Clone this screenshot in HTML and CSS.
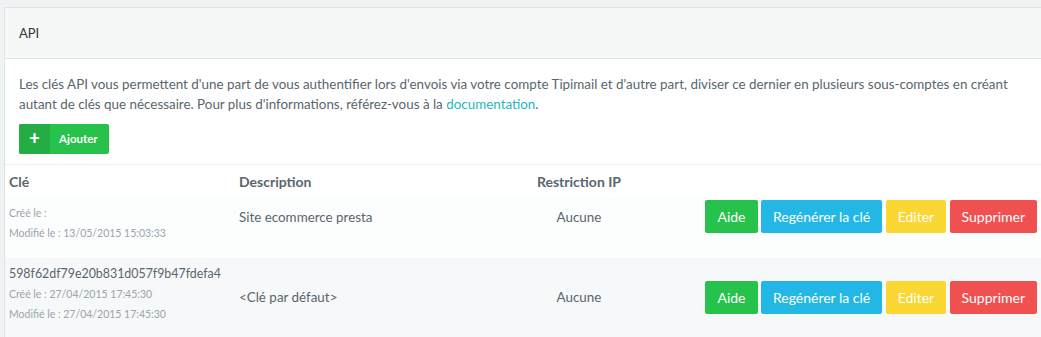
FILE: index.html
```html
<!DOCTYPE html>
<html lang="fr">
<head>
  <meta charset="UTF-8"/>
  <title>API</title>
  <link rel="stylesheet" href="styles.css">
</head>
<body>
  <div class="panel">
    <div class="panel-heading">API</div>

    <div class="panel-body">
      <p>Les clés API vous permettent d'une part de vous authentifier lors d'envois via votre compte Tipimail et d'autre part, diviser ce dernier en plusieurs sous-comptes en créant autant de clés que nécessaire. Pour plus d'informations, référez-vous à la <a href="#">documentation</a>.</p>
      <button class="btn-add"><span class="icon">+</span><span class="label">Ajouter</span></button>
    </div>

    <table>
      <thead>
        <tr>
          <th class="col-key">Clé</th>
          <th class="col-desc">Description</th>
          <th class="col-ip">Restriction IP</th>
          <th class="col-act"></th>
        </tr>
      </thead>
      <tbody>
        <tr class="no-key">
          <td class="key">
            <div class="meta">Créé le :</div>
            <div class="meta">Modifié le : 13/05/2015 15:03:33</div>
          </td>
          <td class="mid">Site ecommerce presta</td>
          <td class="mid center">Aucune</td>
          <td class="mid actions">
            <button class="btn green">Aide</button>
            <button class="btn blue">Regénérer la clé</button>
            <button class="btn yellow">Editer</button>
            <button class="btn red">Supprimer</button>
          </td>
        </tr>
        <tr class="striped">
          <td class="key">
            <div class="hash">598f62df79e20b831d057f9b47fdefa4</div>
            <div class="meta">Créé le : 27/04/2015 17:45:30</div>
            <div class="meta">Modifié le : 27/04/2015 17:45:30</div>
          </td>
          <td class="mid">&lt;Clé par défaut&gt;</td>
          <td class="mid center">Aucune</td>
          <td class="mid actions">
            <button class="btn green">Aide</button>
            <button class="btn blue">Regénérer la clé</button>
            <button class="btn yellow">Editer</button>
            <button class="btn red">Supprimer</button>
          </td>
        </tr>
      </tbody>
    </table>
  </div>
</body>
</html>
```

FILE: styles.css
```css
body { margin:0; padding:7px 0 0 4px; background:#f0f3f4; font-family:'Lato',sans-serif; font-size:13.4px; color:#58666e; overflow:hidden; }
.panel { width:1038px; background:#fff; border:1px solid #dee5e7; border-bottom:none; }
.panel-heading { padding:15px 14px; line-height:20px; background:#f6f8f8; border-bottom:1px solid #dee5e7; color:#333; font-size:13px; }
.panel-body { padding:15px 15px 10px 14px; }
.panel-body p { margin:0 0 10px; line-height:20px; }
.panel-body a { color:#1fb5c0; text-decoration:none; }

.btn-add { display:flex; height:30px; padding:0; border:none; border-radius:2px; background:#27c24c; color:#fff; font-family:inherit; cursor:pointer; overflow:hidden; }
.btn-add .icon { width:31px; height:30px; line-height:28px; background:#23ad44; font-size:18px; font-weight:900; }
.btn-add .label { padding:0 11px 0 9px; line-height:30px; font-size:11.5px; font-weight:bold; }

table { width:100%; border-collapse:collapse; border-top:1px solid #eaeff0; }
th { height:32px; padding:0 4px; text-align:left; font-size:14px; font-weight:bold; }
th.col-key { width:222px; }
th.col-desc { width:227px; }
th.col-ip { width:210px; text-align:center; }
td { padding:6px 4px 15px; vertical-align:middle; }
td.mid { padding-bottom:9px; }
tr.no-key { background:#fcfdfd; }
tr.no-key td.mid { padding-top:3px; padding-bottom:25px; }
tr.striped { background:#f6f8f9; }
.center { text-align:center; }
.hash { line-height:20px; font-size:12.4px; }
.meta { line-height:20px; font-size:10.5px; color:#98a6ad; }

.actions { text-align:right; white-space:nowrap; }
td.actions { padding-right:6px; }
.btn { height:33px; padding:0 12px; border:none; border-radius:2px; color:#fff; font-family:inherit; font-size:14px; cursor:pointer; }
.green { background:#27c24c; }
.blue { background:#23b7e5; }
.yellow { background:#fad733; }
.red { background:#f05050; }
```
